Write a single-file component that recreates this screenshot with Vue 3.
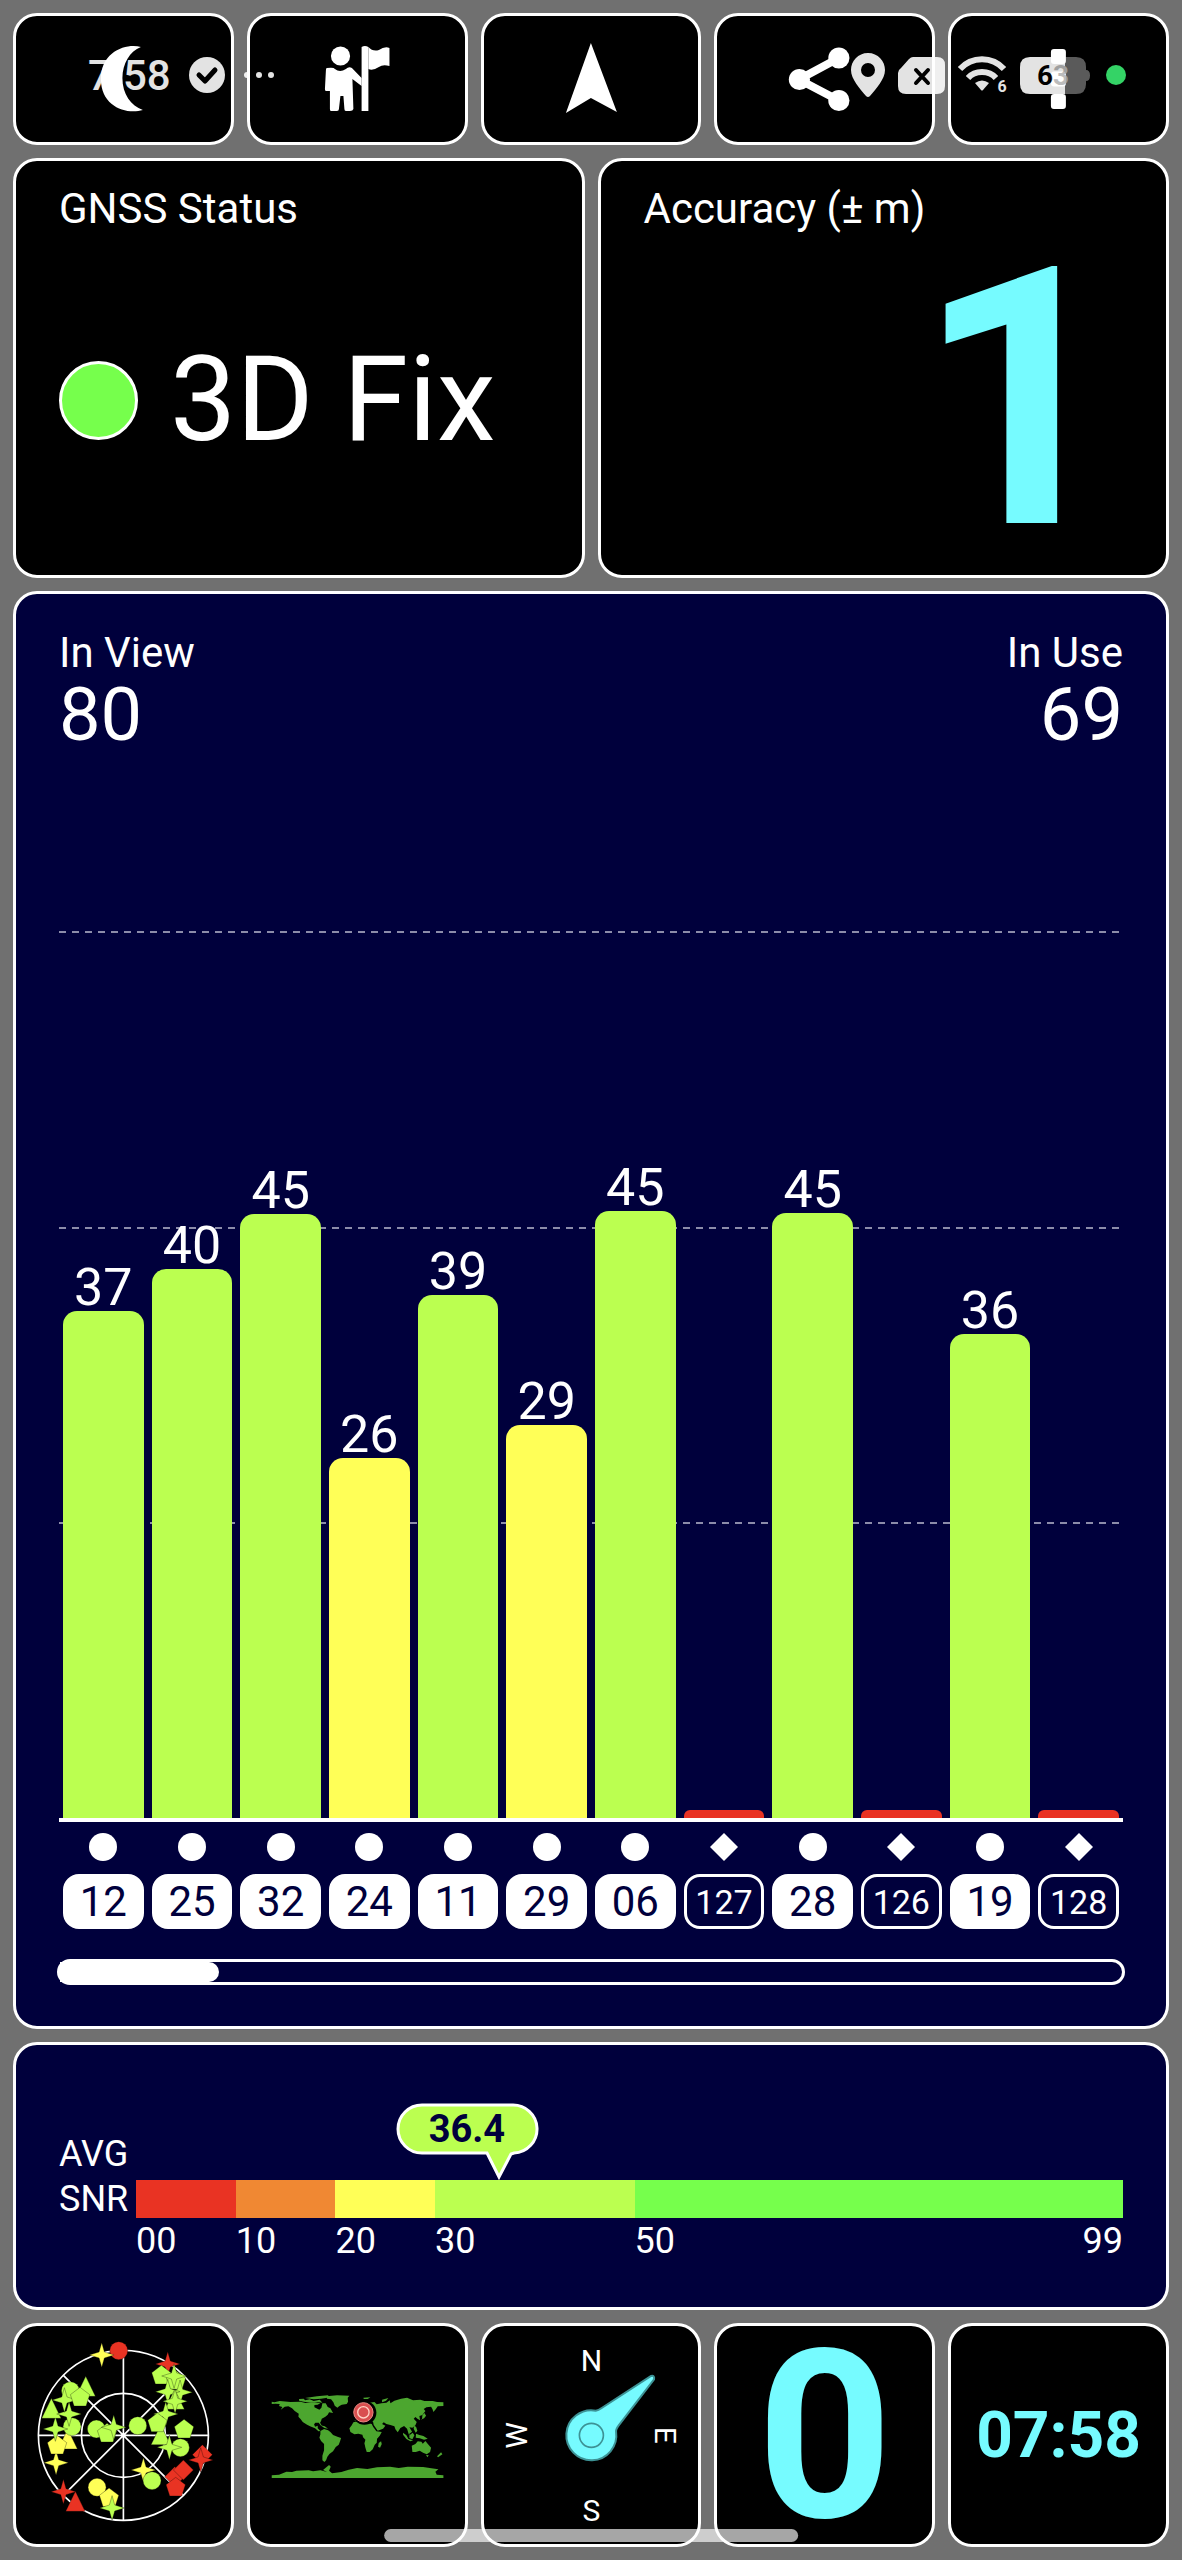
<script setup>
const LIME = '#bbff50'
const YELLOW = '#ffff57'
const RED = '#e93323'

// level: bar height as a share of the plot, in percent
const satellites = [
  { id: '12', snr: '37', level: 57.2, color: LIME, used: true },
  { id: '25', snr: '40', level: 61.9, color: LIME, used: true },
  { id: '32', snr: '45', level: 68.1, color: LIME, used: true },
  { id: '24', snr: '26', level: 40.6, color: YELLOW, used: true },
  { id: '11', snr: '39', level: 59, color: LIME, used: true },
  { id: '29', snr: '29', level: 44.3, color: YELLOW, used: true },
  { id: '06', snr: '45', level: 68.4, color: LIME, used: true },
  { id: '127', snr: '', level: 0.9, color: RED, used: false },
  { id: '28', snr: '45', level: 68.2, color: LIME, used: true },
  { id: '126', snr: '', level: 0.9, color: RED, used: false },
  { id: '19', snr: '36', level: 54.6, color: LIME, used: true },
  { id: '128', snr: '', level: 0.9, color: RED, used: false },
]

const average = 36.4
const bands = [
  { from: '00', span: 10, color: RED },
  { from: '10', span: 10, color: '#f08833' },
  { from: '20', span: 10, color: YELLOW },
  { from: '30', span: 20, color: LIME },
  { from: '50', span: 49, to: '99', color: '#76ff4c' },
]

const shapes = {
  star: 'M0-37L8-9L37 0L8 9L0 37L-8 9L-37 0L-8-9Z',
  pentagon: 'M0-30L29-8L18 26H-18L-29-8Z',
  circle: 'M-27 0A27 27 0 1 1 27 0A27 27 0 1 1-27 0Z',
  triangle: 'M0-36L29 24H-29Z',
  diamond: 'M0-30L30 0L0 30L-30 0Z',
}

const sky = [
  ['circle', 356, 122, RED], ['star', 305, 135, YELLOW], ['star', 503, 162, RED],
  ['pentagon', 484, 196, LIME], ['pentagon', 528, 212, LIME], ['star', 522, 198, LIME],
  ['star', 540, 247, LIME], ['star', 503, 245, LIME], ['triangle', 524, 274, LIME],
  ['star', 525, 274, LIME], ['star', 497, 312, LIME], ['triangle', 482, 380, LIME],
  ['pentagon', 472, 339, LIME], ['circle', 413, 347, LIME], ['pentagon', 552, 358, LIME],
  ['circle', 541, 413, LIME], ['star', 508, 412, LIME], ['diamond', 607, 434, RED],
  ['star', 602, 450, RED], ['diamond', 524, 500, RED], ['diamond', 550, 480, RED],
  ['pentagon', 527, 532, RED], ['star', 430, 480, YELLOW], ['circle', 456, 512, LIME],
  ['circle', 291, 532, YELLOW], ['pentagon', 327, 564, YELLOW], ['star', 336, 594, LIME],
  ['triangle', 226, 580, RED], ['star', 190, 545, RED], ['star', 168, 458, YELLOW],
  ['triangle', 203, 393, YELLOW], ['pentagon', 171, 406, YELLOW], ['circle', 216, 350, LIME],
  ['star', 166, 357, LIME], ['triangle', 154, 301, LIME], ['star', 207, 312, LIME],
  ['triangle', 257, 235, LIME], ['circle', 211, 242, LIME], ['star', 193, 270, LIME],
  ['pentagon', 240, 262, LIME], ['circle', 289, 357, LIME], ['pentagon', 321, 370, LIME],
  ['star', 341, 352, LIME],
]
</script>

<template>
  <main class="page">
    <nav class="tiles toolbar" aria-label="Tools">
      <button class="tile" type="button" aria-label="Night mode">
        <svg viewBox="16 16 215 126"><path fill="#fff" d="M141 47C127 43 101 51 101 79C101 107 127 115 143 110C131 106 122.500 94 122.500 78C122.500 64 130 51 141 47Z" /></svg>
      </button>
      <button class="tile" type="button" aria-label="Waypoints">
        <svg viewBox="250 16 215 126">
          <g fill="#fff">
            <ellipse cx="340.600" cy="56" rx="9.600" ry="9.500" />
            <path d="M327 68Q334 67 335 69Q340 73 346 69Q349 66 352 68L361.700 78V86L352.500 79L353.500 109Q353 111 350 111H346Q344.500 111 344.500 109L343.500 96H340.500L339 109Q339 111 337 111H331Q330 111 330 109V91H326Q325 91 325 89L326 70Q326 68 327 68Z" />
            <path d="M361.700 47Q365 45 368.500 47V111H361.700Z" />
            <path d="M368.500 47Q373 52 379 50Q385 46 389.600 48V66Q383 64 379 67Q373 71 368.500 69Z" />
          </g>
        </svg>
      </button>
      <button class="tile" type="button" aria-label="Navigate">
        <svg viewBox="484 16 215 126"><path fill="#fff" d="M591 43L617 112L591 98L566 113Z" /></svg>
      </button>
      <button class="tile" type="button" aria-label="Share">
        <svg viewBox="717 16 215 126">
          <path d="M839 58L799 79.500L839 100.500" fill="none" stroke="#fff" stroke-width="8" />
          <g fill="#fff"><circle cx="799.500" cy="79.500" r="10.600" /><circle cx="839" cy="58" r="10.600" /><circle cx="839" cy="100.500" r="10.600" /></g>
        </svg>
      </button>
      <button class="tile" type="button" aria-label="More">
        <svg viewBox="951 16 215 126">
          <g fill="#fff"><rect x="1051" y="49" width="15" height="15" rx="3" /><rect x="1051" y="71.500" width="15" height="15" rx="3" /><rect x="1051" y="94" width="15" height="15" rx="3" /></g>
        </svg>
      </button>
    </nav>

    <div class="status-row">
      <section class="panel stat">
        <h2 class="caption">GNSS Status</h2>
        <div class="stat-body">
          <span class="lamp"></span>
          <span class="fix">3D Fix</span>
        </div>
      </section>
      <section class="panel stat">
        <h2 class="caption">Accuracy (± m)</h2>
        <div class="stat-body end"><span class="accuracy">1</span></div>
      </section>
    </div>

    <section class="panel chart">
      <header class="totals">
        <div><h2 class="caption">In View</h2><p class="total">80</p></div>
        <div class="right"><h2 class="caption">In Use</h2><p class="total">69</p></div>
      </header>
      <div class="plot">
        <div class="grid"><i></i><i></i><i></i></div>
        <div class="bars">
          <div v-for="s in satellites" :key="s.id" class="column">
            <span class="value">{{ s.snr }}</span>
            <span class="bar" :class="{ low: !s.used }" :style="{ height: s.level + '%', background: s.color }"></span>
          </div>
        </div>
      </div>
      <div class="legend">
        <div v-for="s in satellites" :key="s.id" class="sat">
          <svg class="symbol" viewBox="0 0 28 28">
            <circle v-if="s.used" cx="14" cy="14" r="14" fill="#fff" />
            <path v-else d="M14 0L28 14L14 28L0 14Z" fill="#fff" />
          </svg>
          <span class="chip" :class="{ outline: !s.used }">{{ s.id }}</span>
        </div>
      </div>
      <div class="scroll"><div class="thumb"></div></div>
    </section>

    <section class="panel snr">
      <div class="snr-label">AVG<br />SNR</div>
      <div class="scale">
        <div class="track">
          <div v-for="b in bands" :key="b.from" class="band" :style="{ flexGrow: b.span, background: b.color }"></div>
          <div class="callout" :style="{ left: (average / 99) * 100 + '%' }">
            <svg viewBox="0 0 142 77"><path d="M26 2H116A24 24 0 0 1 118 50L115 51L103 74L91 50H26A24 24 0 0 1 26 2Z" fill="#bbff50" stroke="#fff" stroke-width="3" /></svg>
            <span>{{ average }}</span>
          </div>
        </div>
        <div class="ticks">
          <div v-for="b in bands" :key="b.from" class="tick" :style="{ flexGrow: b.span }">
            <span>{{ b.from }}</span><span v-if="b.to">{{ b.to }}</span>
          </div>
        </div>
      </div>
    </section>

    <nav class="tiles dock" aria-label="Views">
      <button class="tile" type="button" aria-label="Sky view">
        <svg viewBox="48 48 644 654">
          <g fill="none" stroke="#fff" stroke-width="5">
            <circle cx="370" cy="376" r="255" /><circle cx="370" cy="376" r="126" />
            <path d="M370 121V631M115 376H625M190 196L550 556M550 196L190 556" />
          </g>
          <path v-for="(m, i) in sky" :key="i" :d="shapes[m[0]]" :transform="`translate(${m[1]} ${m[2]})`" :fill="m[3]" stroke="#000" stroke-opacity=".45" stroke-width="2" />
        </svg>
      </button>
      <button class="tile" type="button" aria-label="World map">
        <svg viewBox="29 48 644 654">
          <g fill="#4ca62f">
            <path d="M94 275L102 277L118 273L150 276L180 275L195 279L222 277L240 279L232 284L222 285L222 292L237 299L243 293L246 280L256 280L262 291L270 295L278 309L266 307L262 314L255 320L244 326L242 333L239 338L245 349L240 345L235 338L225 338L221 343L224 350L232 347L232 355L240 363L234 364L224 355L209 349L200 344L187 336L181 328L174 320L175 311L163 303L155 295L144 289L133 290L121 299L126 291L116 288L118 282L105 281L94 282Z" />
            <path d="M176 267L190 266L194 271L208 268L220 273L238 269L246 278L232 276L212 278L190 275L176 272ZM194 264L230 259L262 256L270 262L242 266L220 268ZM240 346L253 349L263 356L252 354Z" />
            <path d="M258 259L290 256L327 257L322 263L323 275L319 282L304 284L296 289L291 293L283 287L279 277L272 268L260 266Z" />
            <path d="M240 363L251 357L263 361L270 366L278 375L291 380L302 384L299 394L295 404L286 411L278 424L267 432L261 440L257 451L252 456L246 451L246 437L251 421L251 402L242 393L237 383L240 373Z" />
            <path d="M333 347L339 337L352 334L366 334L370 341L381 339L394 342L398 350L408 364L424 366L418 377L410 386L409 398L403 404L397 418L388 426L379 426L375 413L372 400L375 389L368 382L366 374L354 371L342 373L330 366L327 355Z" />
            <path d="M422 394L424 402L419 413L413 410L415 399Z" />
            <path d="M343 333L345 321L357 310L365 300L380 288L387 278L402 276L409 283L423 280L438 278L448 271L450 280L462 272L482 266L500 263L518 271L540 269L552 273L577 273L590 276L609 277V288L592 289L586 298L579 306L576 297L572 290L558 292L550 297L555 303L546 315L537 318L539 331L531 326L525 321L520 326L529 336L525 346L516 353L507 352L515 365L506 372L513 382L505 373L500 356L491 348L480 354L472 367L465 358L462 349L450 345L438 342L430 337L425 342L435 347L428 356L412 362L400 345L398 336L385 334L381 326L372 332L362 326L353 334Z" />
            <path d="M545 326L546 316L552 309L557 317L551 325L540 330ZM520 347L527 350L531 362L526 368L520 357ZM488 368L498 376L504 387L518 391L510 394L498 387L488 374ZM507 376L517 368L522 376L516 388L507 384ZM527 371L537 375L549 378L562 386L551 389L538 385L526 383ZM369 263L390 262L382 267L370 267ZM425 269L444 264L437 272L425 277Z" />
            <path d="M514 407L525 402L532 394L543 395L547 401L555 393L563 403L572 413L569 426L559 433L548 428L538 422L526 426L516 426ZM557 435L565 436L561 442ZM602 427L606 433L593 442L590 439Z" />
            <path d="M94 496L116 494L138 485L155 486L168 482L205 481L218 484L240 481L260 486L248 480L256 473L266 465L271 470L266 482L275 490L303 486L325 479L350 474L381 477L410 472L449 470L475 474L502 470L548 471L573 475L594 478L585 485L589 494L609 496V504H94Z" />
          </g>
          <circle cx="372" cy="308" r="36" />
          <circle cx="369" cy="307" r="29" fill="#d94f50" stroke="#ec8a84" stroke-width="3" />
          <circle cx="369" cy="307" r="17" fill="#d94f50" stroke="#ffd2c4" stroke-width="4" />
        </svg>
      </button>
      <button class="tile" type="button" aria-label="Compass">
        <svg viewBox="731 48 644 654">
          <path d="M1127 365A75 75 0 1 1 1066 302Q1074 301 1084 294L1232 198Q1243 195 1241 208L1135 346Q1126 358 1127 365Z" fill="#76fbff" stroke="#3d9295" stroke-width="6" />
          <circle cx="1053" cy="376" r="36" fill="none" stroke="#3d9295" stroke-width="5" />
          <g class="points" fill="#fff" text-anchor="middle">
            <text x="1053" y="182">N</text>
            <text x="1053" y="634">S</text>
            <text transform="translate(1245 376) rotate(90)">E</text>
            <text transform="translate(861 376) rotate(-90)">W</text>
          </g>
        </svg>
      </button>
      <button class="tile speed" type="button">0</button>
      <button class="tile clock" type="button">07:58</button>
    </nav>

    <div class="system-bar">
      <div class="side left-side">
        <span class="time">7:58</span>
        <svg width="36" height="36" viewBox="0 0 36 36"><circle cx="18" cy="18" r="18" fill="#fff" /><path d="M10 18L16 24L26 13" fill="none" stroke="#000" stroke-width="5" stroke-linecap="round" stroke-linejoin="round" /></svg>
        <svg width="32" height="8" viewBox="0 0 32 8"><g fill="#fff"><circle cx="4" cy="4" r="3" /><circle cx="16" cy="4" r="3" /><circle cx="28" cy="4" r="3" /></g></svg>
      </div>
      <div class="side right-side">
        <svg width="34" height="44" viewBox="0 0 34 44"><path fill="#fff" fill-rule="evenodd" d="M17 0C27 0 34 8 34 17C34 26 25 36 19 43Q17 45 15 43C9 36 0 26 0 17C0 8 7 0 17 0ZM17 10A7 7 0 1 0 17 24A7 7 0 1 0 17 10Z" /></svg>
        <svg width="47" height="37" viewBox="0 0 47 37"><path fill="#fff" d="M15 0H39Q47 0 47 8V29Q47 37 39 37H8Q0 37 0 29V16Q0 13 3 11L11 2Q13 0 15 0Z" /><path d="M18 13L30 26M30 13L18 26" stroke="#000" stroke-width="4" stroke-linecap="round" /></svg>
        <svg class="wifi" width="49" height="42" viewBox="0 0 49 42">
          <g fill="none" stroke="#fff" stroke-width="6"><path d="M2 15C14 2 34 2 46 15" /><path d="M10 24C17 16 31 16 38 24" /></g>
          <path fill="#fff" d="M17 29Q24 24 31 29L25 36Q24 37 23 36Z" />
          <text x="44" y="38" text-anchor="middle" fill="#fff">6</text>
        </svg>
        <div class="battery">
          <svg width="70" height="37" viewBox="0 0 70 37"><path fill="#fff" d="M10 0H45V37H10Q0 37 0 27V10Q0 0 10 0Z" /><path fill="#fff" fill-opacity=".4" d="M45 0H56Q66 0 66 10V13Q70 13 70 18.500Q70 24 66 24V27Q66 37 56 37H45Z" /></svg>
          <span class="charge">6<span class="dim">3</span></span>
        </div>
        <span class="privacy"></span>
      </div>
    </div>
    <div class="home-bar"></div>
  </main>
</template>

<style>
body {
  margin: 0;
  background: #707070;
}
</style>

<style scoped>
.page {
  position: relative;
  box-sizing: border-box;
  display: flex;
  flex-direction: column;
  gap: 13px;
  min-height: 100vh;
  padding: 13px;
  background: #707070;
  color: #fff;
  font-family: Roboto, "Liberation Sans", sans-serif;
}
.page * {
  box-sizing: border-box;
}
h2,
p {
  margin: 0;
  font-weight: 400;
}
svg {
  display: block;
  overflow: visible;
}
.tiles {
  display: grid;
  grid-template-columns: repeat(5, minmax(0, 1fr));
  gap: 13px;
}
.tile,
.panel {
  border: 3px solid #fff;
  border-radius: 24px;
}
.tile {
  padding: 0;
  background: #000;
  color: #76fbff;
  font-family: inherit;
  font-weight: 700;
}
.tile svg {
  width: 100%;
  height: 100%;
}
.toolbar .tile {
  height: 132px;
}
.dock .tile {
  height: 224px;
}
.points {
  font-size: 90px;
  font-weight: 400;
}
.dock .speed {
  padding-top: 4px;
  font-size: 236px;
  line-height: 214px;
}
.clock {
  font-size: 64px;
}

.status-row {
  display: grid;
  grid-template-columns: repeat(2, minmax(0, 1fr));
  gap: 13px;
}
.stat {
  padding: 23px 43px 9px;
  background: #000;
}
.caption {
  font-size: 42px;
  line-height: 50px;
}
.stat-body {
  display: flex;
  align-items: center;
  gap: 32px;
  height: 332px;
}
.end {
  justify-content: flex-end;
}
.lamp {
  width: 79px;
  height: 79px;
  border: 3px solid #fff;
  border-radius: 50%;
  background: #76ff4c;
}
.fix {
  font-size: 118px;
  line-height: 118px;
}
.accuracy {
  color: #76fbff;
  font-size: 361px;
  font-weight: 700;
  line-height: 300px;
}

.chart {
  flex: 1;
  display: flex;
  flex-direction: column;
  padding: 34px 43px 41px;
  background: #00003c;
}
.totals {
  display: flex;
  justify-content: space-between;
}
.right {
  text-align: right;
}
.total {
  font-size: 74px;
  line-height: 74px;
}
.plot {
  flex: 1;
  display: grid;
  min-height: 600px;
  margin-top: 179px;
  border-bottom: 4px solid #fff;
}
.grid,
.bars {
  grid-area: 1 / 1;
}
.grid {
  display: grid;
  grid-template-rows: repeat(3, 1fr);
}
.grid i {
  height: 2px;
  background: repeating-linear-gradient(90deg, #8c8caa 0 7px, transparent 7px 13px);
}
.bars,
.legend {
  display: grid;
  grid-template-columns: repeat(12, minmax(0, 1fr));
}
.column {
  display: flex;
  flex-direction: column;
  justify-content: flex-end;
  padding: 0 4px;
}
.value {
  font-size: 52px;
  line-height: 46px;
  text-align: center;
}
.bar {
  flex: none;
  border-radius: 14px 14px 0 0;
}
.bar.low {
  border-radius: 6px 6px 0 0;
}
.legend {
  margin-top: 11px;
}
.sat {
  display: flex;
  flex-direction: column;
  align-items: center;
  gap: 13px;
  padding: 0 4px;
}
.symbol {
  width: 28px;
  height: 28px;
}
.chip {
  width: 100%;
  height: 55px;
  border: 3px solid #fff;
  border-radius: 16px;
  background: #fff;
  color: #00003c;
  font-size: 42px;
  line-height: 50px;
  text-align: center;
}
.chip.outline {
  background: none;
  color: #fff;
  font-size: 34px;
}
.scroll {
  height: 26px;
  margin: 30px -2px 0;
  border: 3px solid #fff;
  border-radius: 13px;
}
.thumb {
  width: 15%;
  height: 100%;
  border-radius: 0 10px 10px 0;
  background: #fff;
}

.snr {
  display: flex;
  padding: 87px 43px 42px;
  background: #00003c;
  font-size: 36px;
}
.snr-label {
  width: 77px;
  line-height: 45px;
}
.scale {
  flex: 1;
  padding-top: 48px;
}
.track {
  position: relative;
  display: flex;
  height: 38px;
}
.band,
.tick {
  flex: 0 1 0;
}
.ticks {
  display: flex;
  line-height: 47px;
}
.tick {
  display: flex;
  justify-content: space-between;
}
.callout {
  position: absolute;
  bottom: 100%;
  width: 142px;
  margin-left: -103px;
  color: #00003c;
  font-size: 38px;
  font-weight: 700;
  line-height: 52px;
  text-align: center;
}
.callout span {
  position: absolute;
  inset: 0;
}

.system-bar {
  position: absolute;
  top: 0;
  left: 0;
  right: 0;
  display: flex;
  justify-content: space-between;
  height: 150px;
  padding: 0 56px 0 88px;
  pointer-events: none;
}
.side {
  display: flex;
  align-items: center;
}
.left-side {
  gap: 18px;
}
.right-side {
  gap: 13px;
}
.time {
  font-size: 42px;
  font-weight: 500;
}
.time,
.side > svg,
.battery {
  opacity: 0.89;
}
.wifi text {
  font-size: 16px;
  font-weight: 700;
}
.battery {
  position: relative;
  margin-right: 3px;
}
.charge {
  position: absolute;
  inset: 0 4px 0 0;
  color: #000;
  font-size: 28px;
  font-weight: 700;
  line-height: 37px;
  text-align: center;
}
.dim {
  color: #b4b4b4;
}
.privacy {
  width: 20px;
  height: 20px;
  border-radius: 50%;
  background: #34d366;
}
.home-bar {
  position: absolute;
  bottom: 18px;
  left: 50%;
  width: 35%;
  height: 13px;
  border-radius: 7px;
  background: rgba(255, 255, 255, 0.65);
  transform: translateX(-50%);
  pointer-events: none;
}
</style>
